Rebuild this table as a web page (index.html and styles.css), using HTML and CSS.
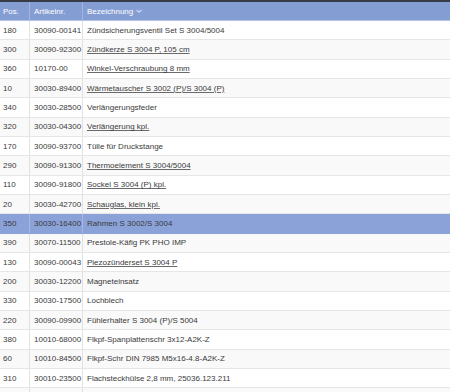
FILE: index.html
```html
<!DOCTYPE html>
<html lang="de">
<head>
<meta charset="utf-8">
<link rel="stylesheet" href="styles.css">
</head>
<body>
<div class="table">
  <div class="row head">
    <div class="cell c1">Pos.</div>
    <div class="cell c2">Artikelnr.</div>
    <div class="cell c3">Bezeichnung <svg class="sort" width="6" height="4" viewBox="0 0 6 4"><path d="M0.5 0.8 L3 3.2 L5.5 0.8" fill="none" stroke="#d3dcf3" stroke-width="1.1"/></svg></div>
  </div>
  <div class="row"><div class="cell c1">180</div><div class="cell c2">30090-00141</div><div class="cell c3">Zündsicherungsventil Set S 3004/5004</div></div>
  <div class="row alt"><div class="cell c1">300</div><div class="cell c2">30090-92300</div><div class="cell c3"><span class="link">Zündkerze S 3004 P, 105 cm</span></div></div>
  <div class="row"><div class="cell c1">360</div><div class="cell c2">10170-00</div><div class="cell c3"><span class="link">Winkel-Verschraubung 8 mm</span></div></div>
  <div class="row alt"><div class="cell c1">10</div><div class="cell c2">30030-89400</div><div class="cell c3"><span class="link">Wärmetauscher S 3002 (P)/S 3004 (P)</span></div></div>
  <div class="row"><div class="cell c1">340</div><div class="cell c2">30030-28500</div><div class="cell c3">Verlängerungsfeder</div></div>
  <div class="row alt"><div class="cell c1">320</div><div class="cell c2">30030-04300</div><div class="cell c3"><span class="link">Verlängerung kpl.</span></div></div>
  <div class="row"><div class="cell c1">170</div><div class="cell c2">30090-93700</div><div class="cell c3">Tülle für Druckstange</div></div>
  <div class="row alt"><div class="cell c1">290</div><div class="cell c2">30090-91300</div><div class="cell c3"><span class="link">Thermoelement S 3004/5004</span></div></div>
  <div class="row"><div class="cell c1">110</div><div class="cell c2">30090-91800</div><div class="cell c3"><span class="link">Sockel S 3004 (P) kpl.</span></div></div>
  <div class="row alt"><div class="cell c1">20</div><div class="cell c2">30030-42700</div><div class="cell c3"><span class="link">Schauglas, klein kpl.</span></div></div>
  <div class="row sel"><div class="cell c1">350</div><div class="cell c2">30030-16400</div><div class="cell c3">Rahmen S 3002/S 3004</div></div>
  <div class="row alt"><div class="cell c1">390</div><div class="cell c2">30070-11500</div><div class="cell c3">Prestole-Käfig PK PHO IMP</div></div>
  <div class="row"><div class="cell c1">130</div><div class="cell c2">30090-00043</div><div class="cell c3"><span class="link">Piezozünderset S 3004 P</span></div></div>
  <div class="row alt"><div class="cell c1">200</div><div class="cell c2">30030-12200</div><div class="cell c3">Magneteinsatz</div></div>
  <div class="row"><div class="cell c1">330</div><div class="cell c2">30030-17500</div><div class="cell c3">Lochblech</div></div>
  <div class="row alt"><div class="cell c1">220</div><div class="cell c2">30090-09900</div><div class="cell c3">Fühlerhalter S 3004 (P)/S 5004</div></div>
  <div class="row"><div class="cell c1">380</div><div class="cell c2">10010-68000</div><div class="cell c3">Flkpf-Spanplattenschr 3x12-A2K-Z</div></div>
  <div class="row alt"><div class="cell c1">60</div><div class="cell c2">10010-84500</div><div class="cell c3">Flkpf-Schr DIN 7985 M5x16-4.8-A2K-Z</div></div>
  <div class="row"><div class="cell c1">310</div><div class="cell c2">30010-23500</div><div class="cell c3">Flachsteckhülse 2,8 mm, 25036.123.211</div></div>
  <div class="row alt"><div class="cell c1"></div><div class="cell c2"></div><div class="cell c3"></div></div>
</div>
</body>
</html>
```
FILE: styles.css
```css
html, body {
  margin: 0;
  padding: 0;
  background: #ffffff;
}
body {
  font-family: "Liberation Sans", Arial, sans-serif;
  font-size: 8px;
  color: #3a3a3a;
  width: 450px;
  height: 392px;
  overflow: hidden;
}
.table {
  display: flex;
  flex-direction: column;
  border-top: 2px solid #363b45;
}
.row {
  display: grid;
  grid-template-columns: 30px 53px 1fr;
  height: 19.333px;
  box-sizing: border-box;
  border-bottom: 1px solid #e6e6e6;
  background: #ffffff;
}
.row.alt {
  background: #f9f9f9;
}
.row.head {
  height: 19px;
  background: #849dd3;
  color: #ffffff;
  border-bottom: 1px solid #b4c3e8;
}
.row.sel {
  background: #8ba2d9;
  border-bottom-color: #8ba2d9;
}
.cell {
  display: flex;
  align-items: center;
  padding-left: 3px;
  white-space: nowrap;
  overflow: hidden;
  border-right: 1px solid #e2e2e2;
}
.cell.c2 {
  padding-left: 4px;
}
.cell.c3 {
  padding-left: 4px;
  border-right: none;
}
.head .cell {
  border-right-color: #a3b5e2;
}
.sel .cell {
  border-right-color: #a6b7e3;
}
.sort {
  margin-left: 3px;
}
.link {
  text-decoration: underline;
  text-decoration-color: #6a6a6a;
}
```
